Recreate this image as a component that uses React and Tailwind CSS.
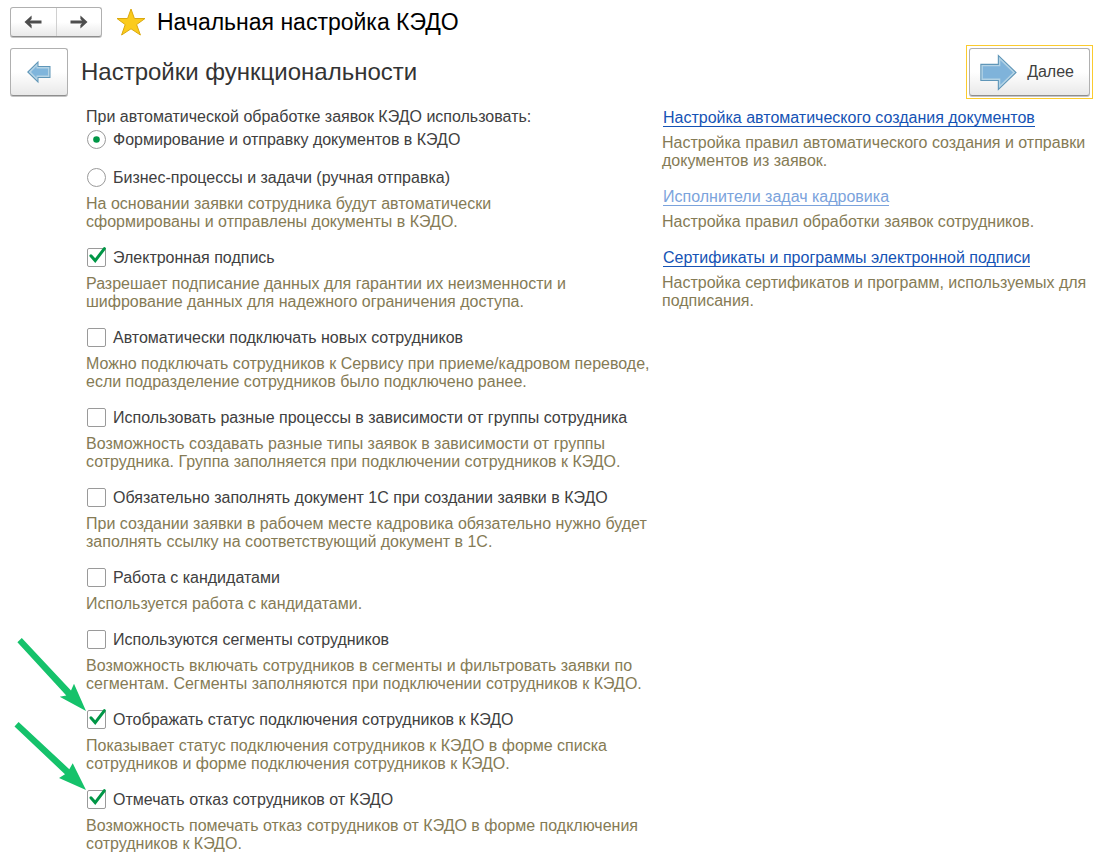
import { useState } from "react";

const OPTIONS = [
  {
    id: "signature",
    label: "Электронная подпись",
    hint: "Разрешает подписание данных для гарантии их неизменности и\nшифрование данных для надежного ограничения доступа.",
    checked: true,
  },
  {
    id: "auto-connect",
    label: "Автоматически подключать новых сотрудников",
    hint: "Можно подключать сотрудников к Сервису при приеме/кадровом переводе,\nесли подразделение сотрудников было подключено ранее.",
  },
  {
    id: "group-processes",
    label: "Использовать разные процессы в зависимости от группы сотрудника",
    hint: "Возможность создавать разные типы заявок в зависимости от группы\nсотрудника. Группа заполняется при подключении сотрудников к КЭДО.",
  },
  {
    id: "require-document",
    label: "Обязательно заполнять документ 1С при создании заявки в КЭДО",
    hint: "При создании заявки в рабочем месте кадровика обязательно нужно будет\nзаполнять ссылку на соответствующий документ в 1С.",
  },
  {
    id: "candidates",
    label: "Работа с кандидатами",
    hint: "Используется работа с кандидатами.",
  },
  {
    id: "segments",
    label: "Используются сегменты сотрудников",
    hint: "Возможность включать сотрудников в сегменты и фильтровать заявки по\nсегментам. Сегменты заполняются при подключении сотрудников к КЭДО.",
  },
  {
    id: "show-status",
    label: "Отображать статус подключения сотрудников к КЭДО",
    hint: "Показывает статус подключения сотрудников к КЭДО в форме списка\nсотрудников и форме подключения сотрудников к КЭДО.",
    checked: true,
    pointer: "steep",
  },
  {
    id: "mark-refusal",
    label: "Отмечать отказ сотрудников от КЭДО",
    hint: "Возможность помечать отказ сотрудников от КЭДО в форме подключения\nсотрудников к КЭДО.",
    checked: true,
    pointer: "flat",
  },
];

const LINKS = [
  {
    label: "Настройка автоматического создания документов",
    hint: "Настройка правил автоматического создания и отправки\nдокументов из заявок.",
  },
  {
    label: "Исполнители задач кадровика",
    hint: "Настройка правил обработки заявок сотрудников.",
    muted: true,
  },
  {
    label: "Сертификаты и программы электронной подписи",
    hint: "Настройка сертификатов и программ, используемых для\nподписания.",
  },
];

const POINTER_PATHS = {
  steep: "M3.4 4.2 7.8 0 57 52.4 60 45.7 72 73 45.7 58.7 52.3 57.6Z",
  flat: "M0.5 8.4 4.6 4 55.3 51.2 58.7 45.3 72 72 45 60 51 56.3Z",
};

const RAISED =
  "border border-[#b0b0b0] border-b-[#8e8e8e] bg-linear-to-b from-white from-50% to-[#e9e9e9] shadow-[0_1px_0_#c4c4c4]";

function Hint({ children }) {
  return <p className="whitespace-pre-line leading-[18px] text-[#857b55]">{children}</p>;
}

function SmallArrow({ flip }) {
  return (
    <svg width="18" height="14" viewBox="0 0 18 14" className={flip ? "-scale-x-100" : ""} aria-hidden="true">
      <path d="M0.5 7 7.6 0.6V4L6 5.5H17.5V8.5H6L7.6 10V13.4Z" fill="#4d4d4d" />
    </svg>
  );
}

function Pointer({ kind }) {
  return (
    <svg
      width="72"
      height="74"
      viewBox="0 0 72 74"
      className="pointer-events-none absolute right-full bottom-[18px]"
      aria-hidden="true"
    >
      <path d={POINTER_PATHS[kind]} fill="#15c26b" />
    </svg>
  );
}

function CheckRow({ option }) {
  const [checked, setChecked] = useState(Boolean(option.checked));
  return (
    <div className="relative flex flex-col gap-[7px]">
      {option.pointer && (
        <div className="absolute top-0 left-0 h-5">
          <Pointer kind={option.pointer} />
        </div>
      )}
      <div className="flex h-5 items-start gap-[7px] pl-px">
        <span className="relative grid size-[19px] shrink-0">
          <input
            id={option.id}
            type="checkbox"
            checked={checked}
            onChange={(e) => setChecked(e.target.checked)}
            className="size-[19px] appearance-none rounded-xs border border-[#9a9a9a] bg-white"
          />
          {checked && (
            <svg
              width="19"
              height="19"
              viewBox="0 0 19 19"
              className="pointer-events-none absolute inset-0 overflow-visible"
              aria-hidden="true"
            >
              <path d="M3.9 7.8 8.2 12.6 17.4 0.6" fill="none" stroke="#009646" strokeWidth="3" strokeLinecap="round" />
            </svg>
          )}
        </span>
        <label htmlFor={option.id} className="leading-5">
          {option.label}
        </label>
      </div>
      <Hint>{option.hint}</Hint>
    </div>
  );
}

function RadioRow({ id, label, checked, onSelect }) {
  return (
    <div className="flex h-5 items-start gap-[7px] pl-px">
      <span className="relative grid size-[19px] shrink-0">
        <input
          id={id}
          type="radio"
          name="processing"
          checked={checked}
          onChange={onSelect}
          className="size-[19px] appearance-none rounded-full border border-[#9a9a9a] bg-white"
        />
        {checked && (
          <svg width="19" height="19" viewBox="0 0 19 19" className="pointer-events-none absolute inset-0" aria-hidden="true">
            <circle cx="9.5" cy="9.5" r="3.3" fill="#009646" />
          </svg>
        )}
      </span>
      <label htmlFor={id} className="leading-5">
        {label}
      </label>
    </div>
  );
}

export default function App() {
  const [mode, setMode] = useState("documents");
  return (
    <div className="min-h-screen bg-white pb-2 font-['Liberation_Sans',Arial,sans-serif] text-[16px] leading-[18px] text-[#404040]">
      <header className="flex items-center gap-[14px] px-[10px] pt-[7px]">
        <div className={`flex h-[30px] w-[92px] rounded-[3px] ${RAISED}`}>
          <button type="button" aria-label="Назад" className="grid flex-1 place-items-center border-r border-[#d0d0d0]">
            <SmallArrow />
          </button>
          <button type="button" aria-label="Вперед" className="grid flex-1 place-items-center">
            <SmallArrow flip />
          </button>
        </div>
        <div className="flex items-center gap-[11px]">
          <svg width="30" height="28" viewBox="0 0 30 28" aria-hidden="true">
            <path
              d="M15 1 18.4 10.5H29L20.6 16.6 24.4 27 15 20.8 5.6 27 9.2 16.6 1 10.5H11.6Z"
              fill="#fbcb1c"
              stroke="#dba90f"
              strokeLinejoin="round"
            />
          </svg>
          <h1 className="text-[23px] leading-[30px] text-black">Начальная настройка КЭДО</h1>
        </div>
      </header>

      <div className="flex items-center justify-between pt-2 pr-3 pl-[10px]">
        <div className="flex items-center gap-[13px]">
          <button type="button" aria-label="Предыдущий шаг" className={`grid h-12 w-[58px] place-items-center rounded-[3px] ${RAISED}`}>
            <svg width="26" height="24" viewBox="0 0 26 24" aria-hidden="true">
              <path d="M1 12 12.5 0.8V6H24.5V18H12.5V23.2Z" fill="#5f96b8" />
              <path d="M2.6 12 11.5 3.2V7H23.5V17H11.5V20.8Z" fill="#b4d3e5" />
              <path d="M5 12 10.5 6.2V8.6H22V15.4H10.5V17.8Z" fill="#7fb5dc" />
            </svg>
          </button>
          <h2 className="text-[24px] leading-[30px] text-[#333333]">Настройки функциональности</h2>
        </div>
        <div className="border border-[#fbcb2e] p-[2px]">
          <button type="button" className={`flex h-12 items-center gap-[10px] rounded-[3px] pr-[15px] pl-[10px] ${RAISED}`}>
            <svg width="37" height="37" viewBox="0 0 37 37" aria-hidden="true">
              <path d="M0.3 9.8H17.8V0.3L36.8 18.5 17.8 36.7V27H0.3Z" fill="#5f96b8" />
              <path d="M1.4 10.9H18.9V2.8L35.2 18.5 18.9 34.2V25.9H1.4Z" fill="#b4d3e5" />
              <path d="M2.8 12.3H20.3V6.2L33 18.5 20.3 30.8V24.5H2.8Z" fill="#7fb3da" />
            </svg>
            <span>Далее</span>
          </button>
        </div>
      </div>

      <main className="flex pt-[9px] pr-3 pl-[86px]">
        <section className="flex flex-[576] flex-col gap-[17px]">
          <fieldset className="flex flex-col">
            <legend className="pb-[4px]">При автоматической обработке заявок КЭДО использовать:</legend>
            <div className="flex flex-col gap-[18px]">
              <RadioRow
                id="mode-documents"
                label="Формирование и отправку документов в КЭДО"
                checked={mode === "documents"}
                onSelect={() => setMode("documents")}
              />
              <div className="flex flex-col gap-[7px]">
                <RadioRow
                  id="mode-tasks"
                  label="Бизнес-процессы и задачи (ручная отправка)"
                  checked={mode === "tasks"}
                  onSelect={() => setMode("tasks")}
                />
                <Hint>{"На основании заявки сотрудника будут автоматически\nсформированы и отправлены документы в КЭДО."}</Hint>
              </div>
            </div>
          </fieldset>
          {OPTIONS.map((option) => (
            <CheckRow key={option.id} option={option} />
          ))}
        </section>

        <aside className="flex flex-[431] flex-col gap-[18px] pt-px">
          {LINKS.map((link) => (
            <div key={link.label} className="flex flex-col items-start gap-[7px]">
              <a
                href="#"
                className={`ml-px border-b leading-[17px] ${
                  link.muted ? "border-[#7ba3dc] text-[#7ba3dc]" : "border-[#1553b5] text-[#1553b5]"
                }`}
              >
                {link.label}
              </a>
              <Hint>{link.hint}</Hint>
            </div>
          ))}
        </aside>
      </main>
    </div>
  );
}
